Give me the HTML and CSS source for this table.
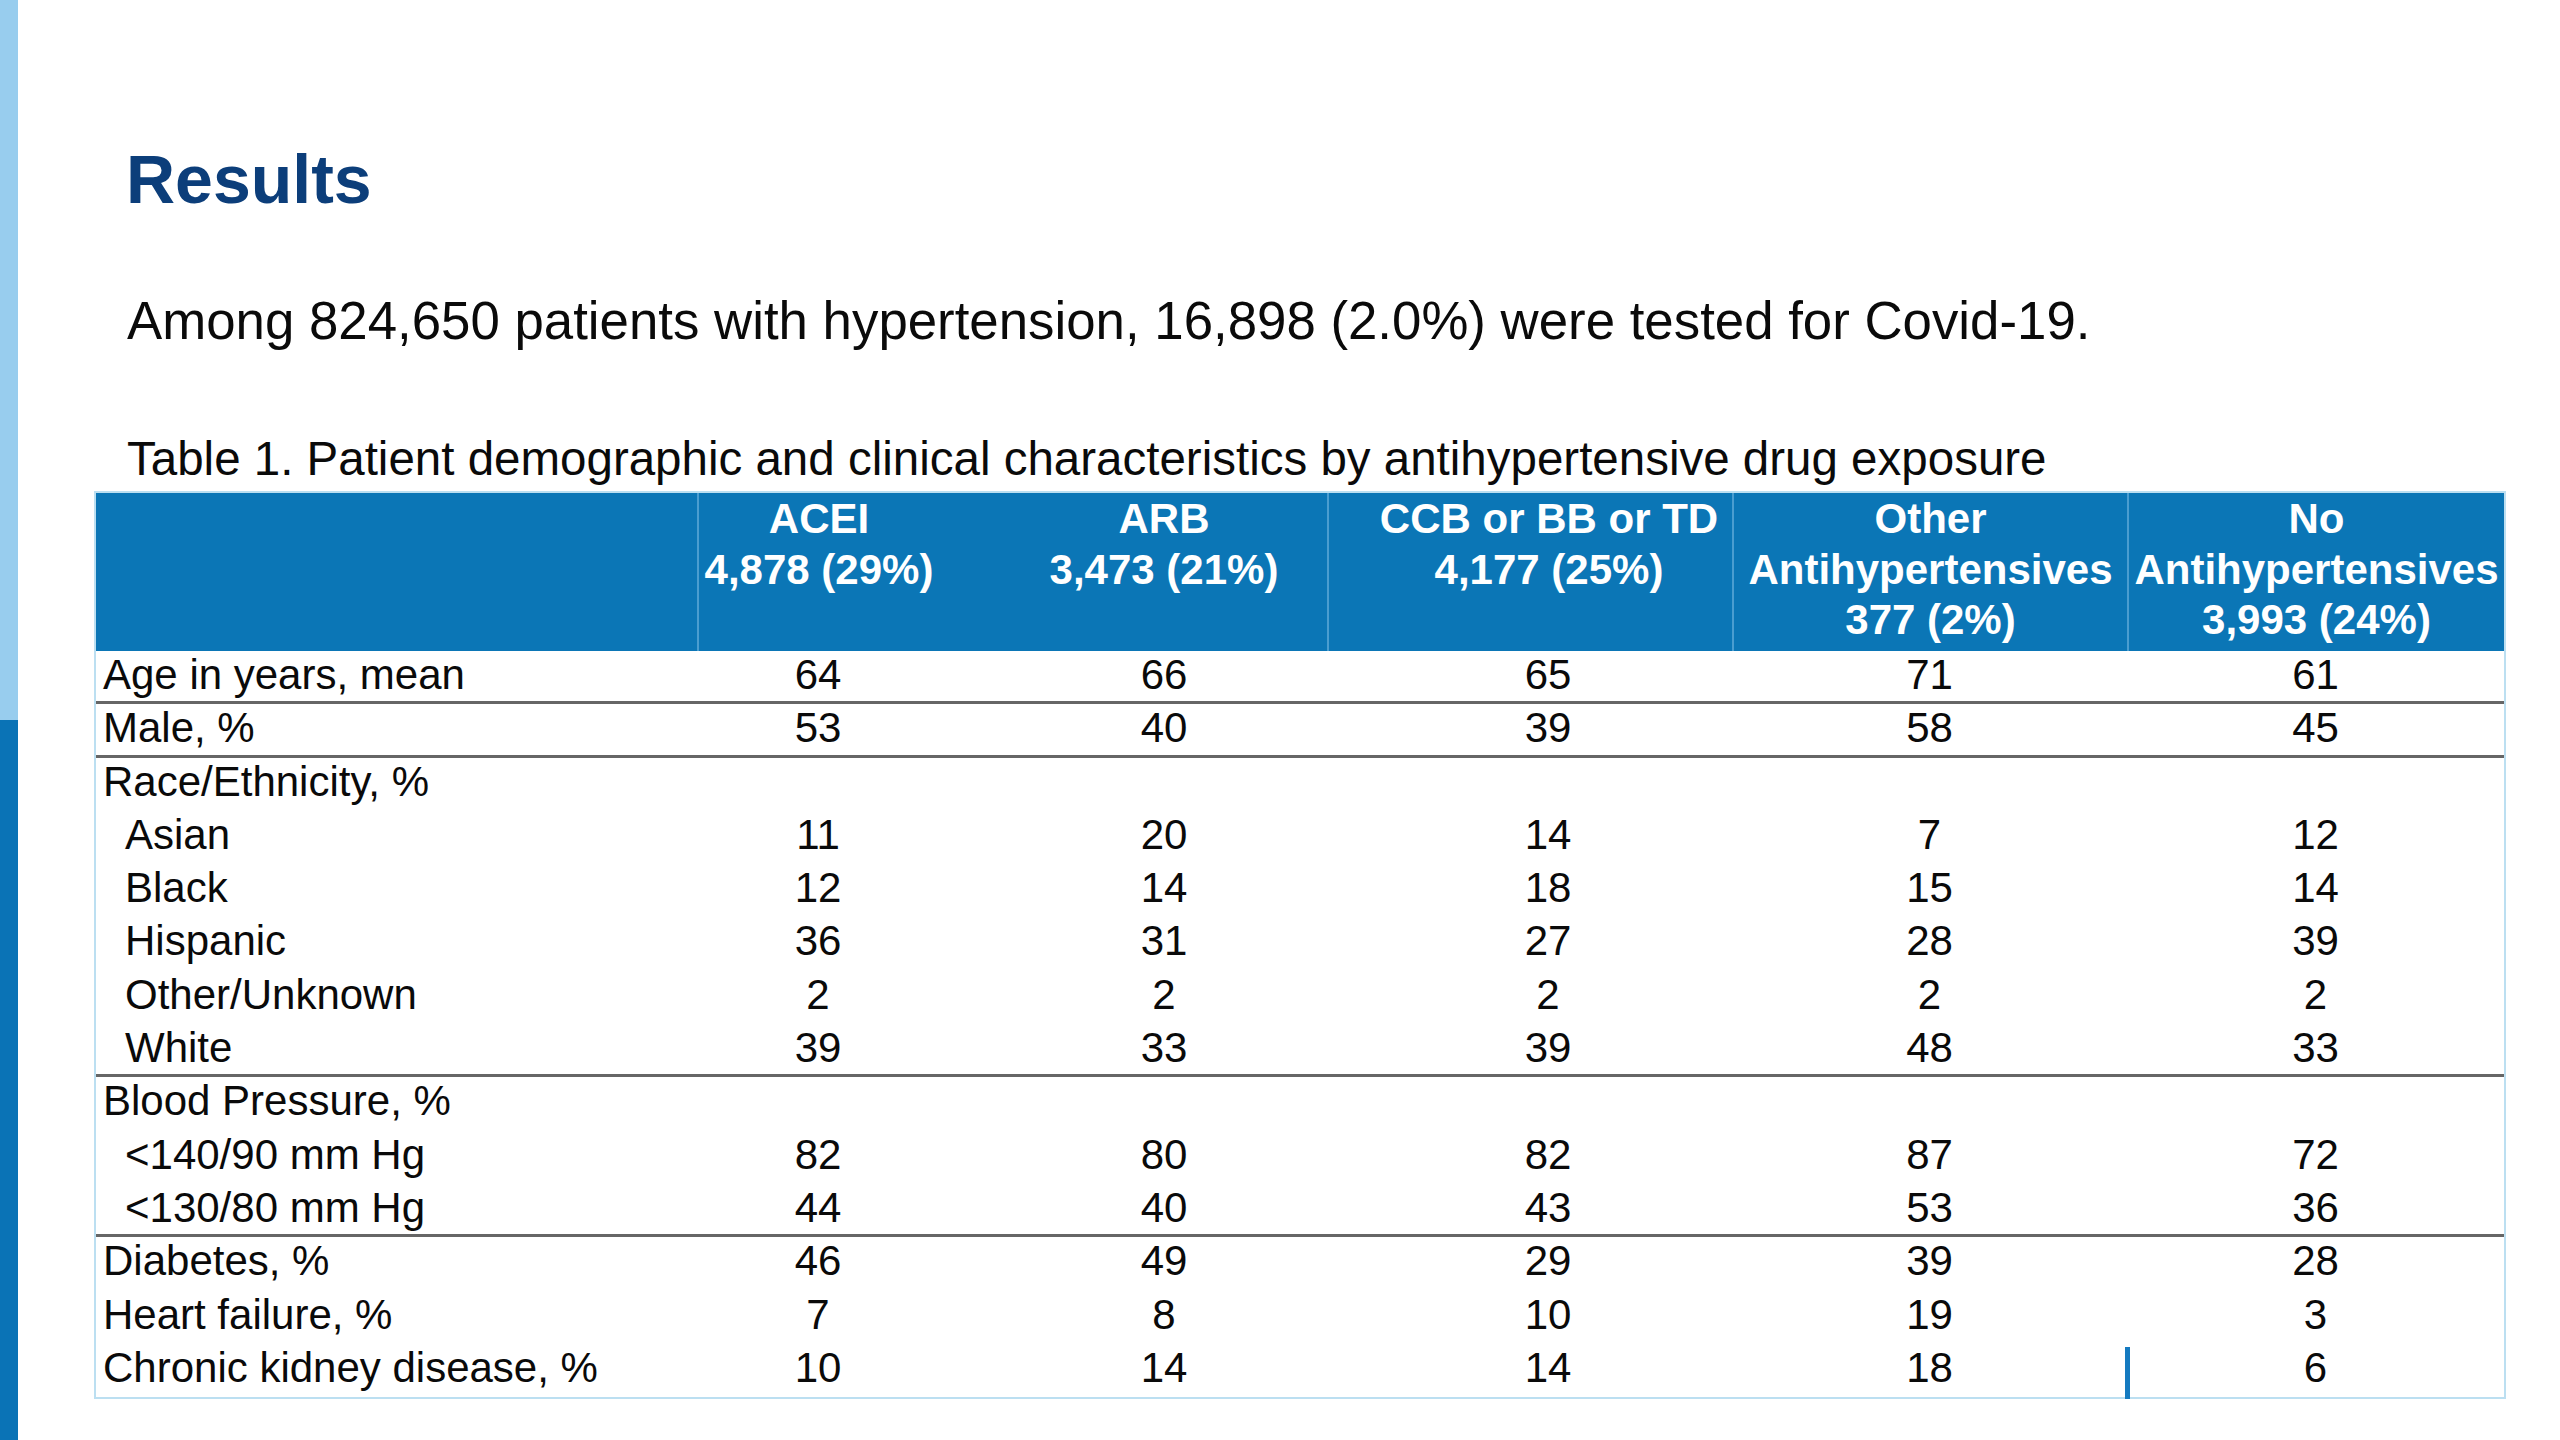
FILE: index.html
```html
<!DOCTYPE html>
<html lang="en">
<head>
<meta charset="utf-8">
<title>Results</title>
<link rel="stylesheet" href="styles.css">
</head>
<body>
<div class="slide">
  <div class="sidebar"></div>
  <main class="content">
    <h1 class="title">Results</h1>
    <p class="lead">Among 824,650 patients with hypertension, 16,898 (2.0%) were tested for Covid-19.</p>
    <p class="caption">Table 1. Patient demographic and clinical characteristics by antihypertensive drug exposure</p>
    <div class="table" role="table">
      <div class="thead" role="row">
        <div class="th" role="columnheader"></div>
        <div class="th div" role="columnheader">ACEI<br>4,878 (29%)</div>
        <div class="th arb" role="columnheader">ARB<br>3,473 (21%)</div>
        <div class="th ccb div" role="columnheader">CCB or BB or TD<br>4,177 (25%)</div>
        <div class="th div" role="columnheader">Other<br>Antihypertensives<br>377 (2%)</div>
        <div class="th div" role="columnheader">No<br>Antihypertensives<br>3,993 (24%)</div>
      </div>

      <div class="row sep" role="row"><div class="lbl">Age in years, mean</div><div class="v">64</div><div class="v arb">66</div><div class="v ccb">65</div><div class="v">71</div><div class="v">61</div></div>
      <div class="row sep" role="row"><div class="lbl">Male, %</div><div class="v">53</div><div class="v arb">40</div><div class="v ccb">39</div><div class="v">58</div><div class="v">45</div></div>
      <div class="row" role="row"><div class="lbl">Race/Ethnicity, %</div><div class="v"></div><div class="v arb"></div><div class="v ccb"></div><div class="v"></div><div class="v"></div></div>
      <div class="row" role="row"><div class="lbl sub">Asian</div><div class="v">11</div><div class="v arb">20</div><div class="v ccb">14</div><div class="v">7</div><div class="v">12</div></div>
      <div class="row" role="row"><div class="lbl sub">Black</div><div class="v">12</div><div class="v arb">14</div><div class="v ccb">18</div><div class="v">15</div><div class="v">14</div></div>
      <div class="row" role="row"><div class="lbl sub">Hispanic</div><div class="v">36</div><div class="v arb">31</div><div class="v ccb">27</div><div class="v">28</div><div class="v">39</div></div>
      <div class="row" role="row"><div class="lbl sub">Other/Unknown</div><div class="v">2</div><div class="v arb">2</div><div class="v ccb">2</div><div class="v">2</div><div class="v">2</div></div>
      <div class="row sep" role="row"><div class="lbl sub">White</div><div class="v">39</div><div class="v arb">33</div><div class="v ccb">39</div><div class="v">48</div><div class="v">33</div></div>
      <div class="row" role="row"><div class="lbl">Blood Pressure, %</div><div class="v"></div><div class="v arb"></div><div class="v ccb"></div><div class="v"></div><div class="v"></div></div>
      <div class="row" role="row"><div class="lbl sub">&lt;140/90 mm Hg</div><div class="v">82</div><div class="v arb">80</div><div class="v ccb">82</div><div class="v">87</div><div class="v">72</div></div>
      <div class="row sep" role="row"><div class="lbl sub">&lt;130/80 mm Hg</div><div class="v">44</div><div class="v arb">40</div><div class="v ccb">43</div><div class="v">53</div><div class="v">36</div></div>
      <div class="row" role="row"><div class="lbl">Diabetes, %</div><div class="v">46</div><div class="v arb">49</div><div class="v ccb">29</div><div class="v">39</div><div class="v">28</div></div>
      <div class="row" role="row"><div class="lbl">Heart failure, %</div><div class="v">7</div><div class="v arb">8</div><div class="v ccb">10</div><div class="v">19</div><div class="v">3</div></div>
      <div class="row last" role="row"><div class="lbl">Chronic kidney disease, %</div><div class="v">10</div><div class="v arb">14</div><div class="v ccb">14</div><div class="v">18</div><div class="v cursor">6</div></div>
    </div>
  </main>
</div>
</body>
</html>
```

FILE: styles.css
```css
html, body {
  margin: 0;
  padding: 0;
  background: #ffffff;
}

body {
  width: 2560px;
  height: 1440px;
  overflow: hidden;
  font-family: "Liberation Sans", Arial, Helvetica, sans-serif;
  color: #0a0a0a;
}

.slide {
  display: flex;
  height: 1440px;
}

.sidebar {
  width: 18px;
  flex: 0 0 18px;
  background: linear-gradient(to bottom, #98cdee 0, #98cdee 720px, #0a73b6 720px, #0a73b6 100%);
}

.content {
  flex: 1;
  padding-left: 76px;
  padding-top: 139px;
}

.title {
  margin: 0 0 0 32px;
  font-size: 68px;
  line-height: 80px;
  font-weight: bold;
  color: #0c3e7a;
}

.lead {
  margin: 71px 0 0 33px;
  font-size: 52.8px;
  line-height: 62px;
}

.caption {
  margin: 79px 0 0 33px;
  font-size: 47.5px;
  line-height: 56px;
}

.table {
  margin-top: 4px;
  width: 2412px;
  box-sizing: border-box;
  border: 2px solid #bcdff1;
  font-size: 42px;
}

.thead,
.row {
  display: grid;
  grid-template-columns: 601px 242px 388px 405px 395px 377px;
}

.thead {
  height: 158px;
  background: #0b76b6;
  color: #ffffff;
}

.th {
  box-sizing: border-box;
  padding-top: 1px;
  font-weight: bold;
  line-height: 50.5px;
  text-align: center;
}

.th.div {
  border-left: 2px solid #4a9dd0;
}

.arb {
  padding-left: 62px;
}

.ccb {
  padding-left: 37px;
}

.row {
  height: 53.3px;
  box-sizing: border-box;
  line-height: 48px;
}

.row.sep {
  border-bottom: 3px solid #666666;
}

.lbl {
  padding-left: 7px;
  white-space: nowrap;
}

.lbl.sub {
  padding-left: 29px;
}

.v {
  box-sizing: border-box;
  text-align: center;
}

.cursor {
  position: relative;
}

.cursor::before {
  content: "";
  position: absolute;
  left: -2px;
  top: 3px;
  bottom: -2px;
  width: 5px;
  background: #147ac0;
}
```
